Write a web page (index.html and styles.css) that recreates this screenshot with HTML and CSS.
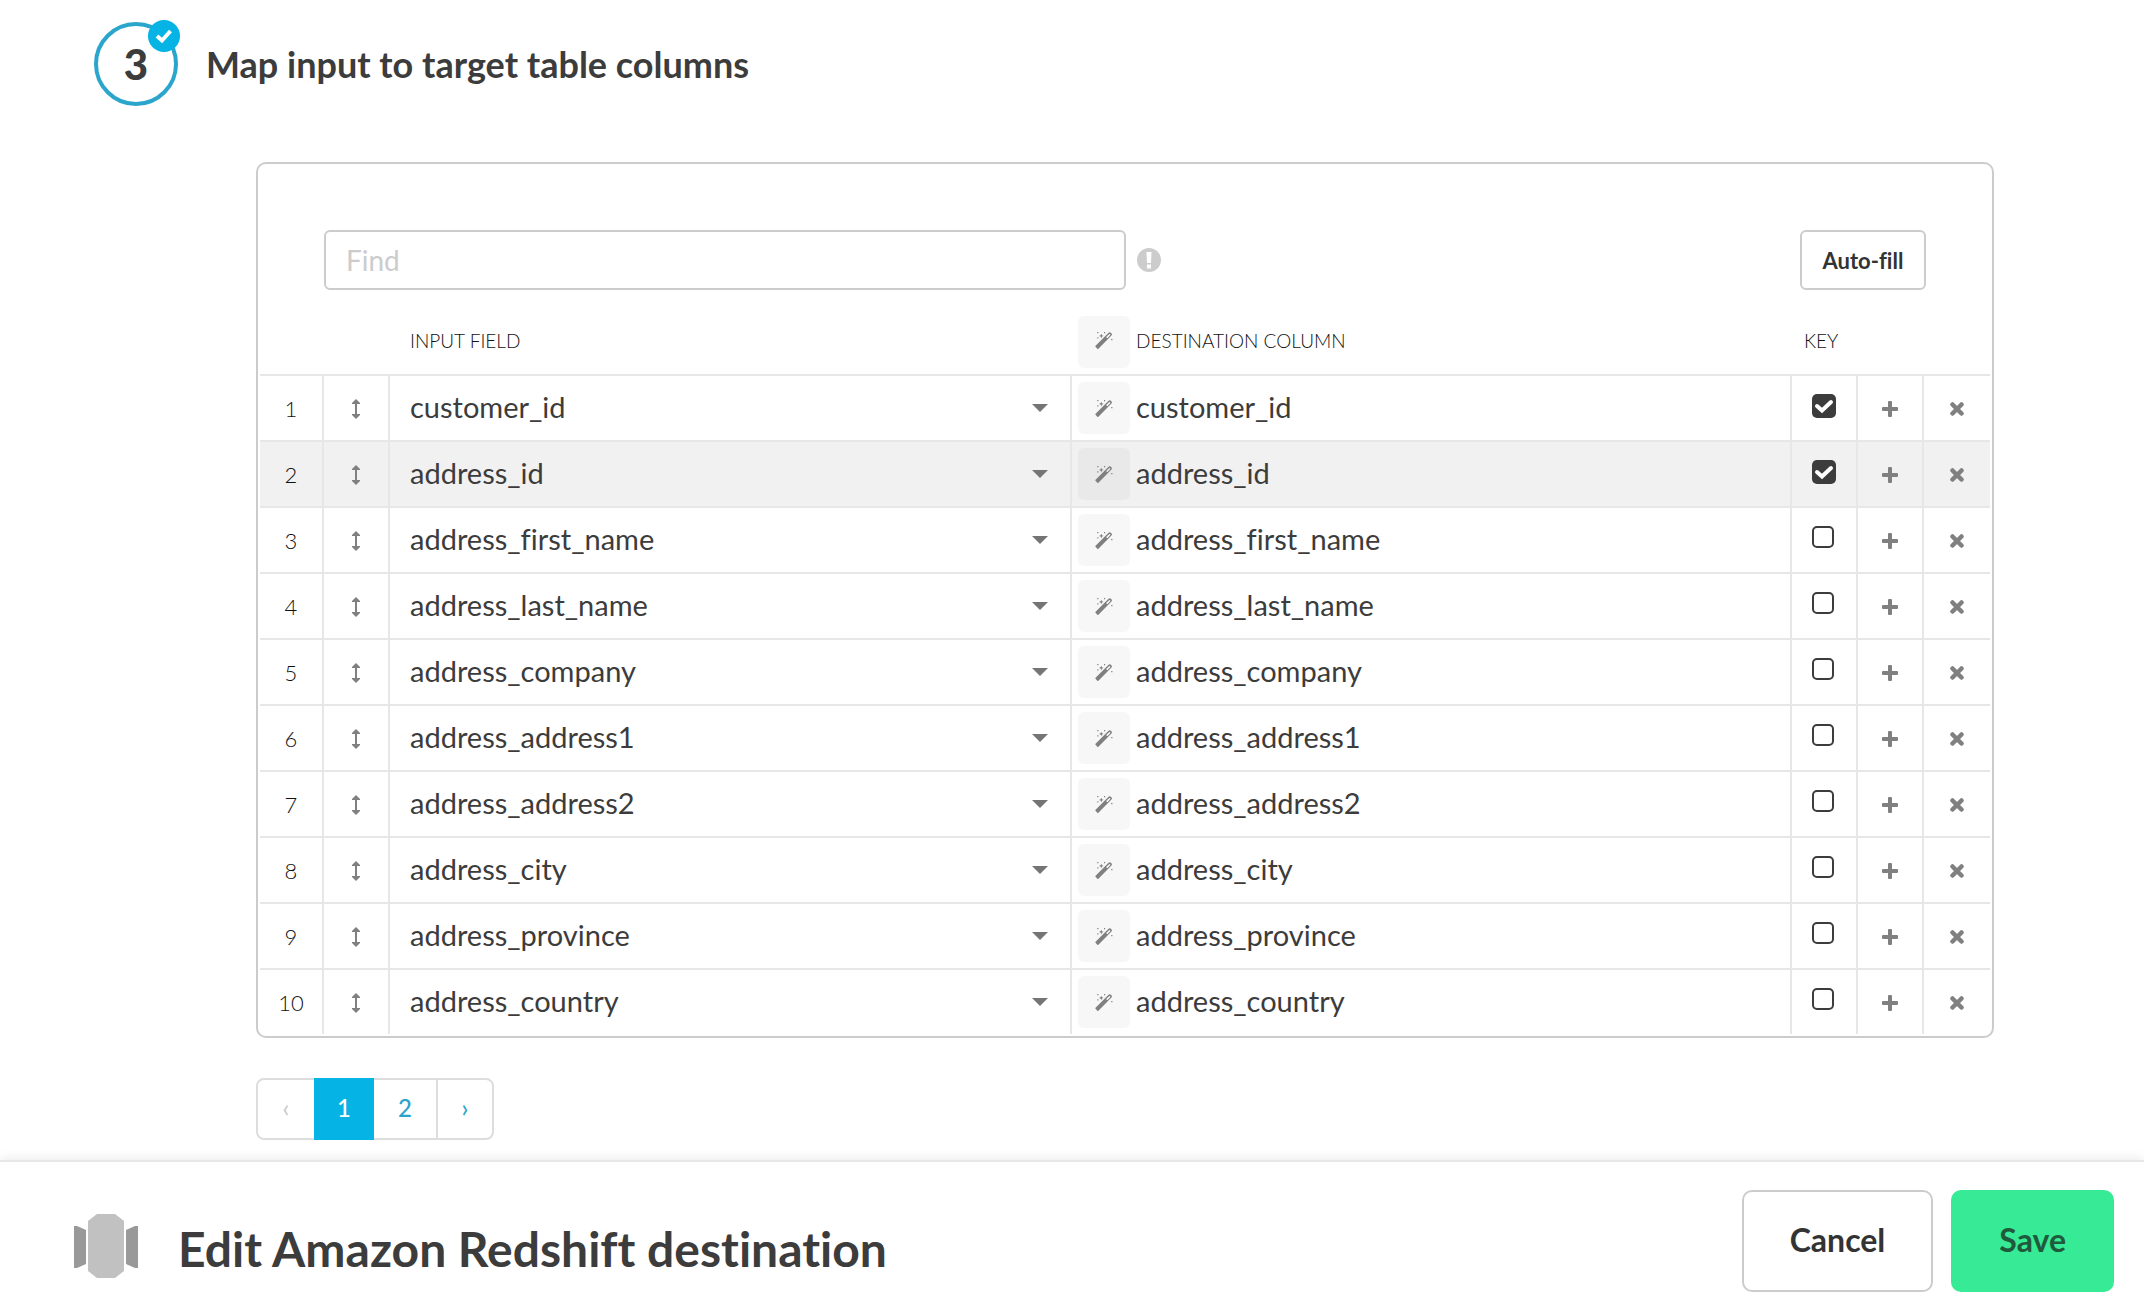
FILE: index.html
```html
<!DOCTYPE html>
<html lang="en">
<head>
<meta charset="utf-8">
<title>Edit Amazon Redshift destination</title>
<link rel="stylesheet" href="styles.css">
</head>
<body>
<svg class="sprite" aria-hidden="true">
  <symbol id="i-move" viewBox="0 0 8 20"><path d="M4 0l4 4v1H5v10h3v1l-4 4-4-4v-1h3V5H0V4z"/></symbol>
  <symbol id="i-wand" viewBox="0 0 20 20"><path fill-rule="evenodd" d="M0.600 16.400 14.800 2.200q1.600-1.600 3.200 0t0 3.200L3.800 19.600q-.6.600-1.200 0L.6 17.600q-.6-.6 0-1.200zM12.400 6.800l1.200 1.200 3-3q.8-.8.200-1.400t-1.400.2z"/><path d="M7 3l.8 1.800 1.800.7-1.800.7L7 8l-.8-1.800-1.800-.7 1.800-.7zM2.500 1.200h1.300v1.300H2.500zM10 1.200h1.300v1.300H10zM2.500 7h1.300v1.300H2.500zM18 9h1.400v1.400H18z"/></symbol>
  <symbol id="i-plus" viewBox="0 0 16 16"><path d="M7 0h2q1 0 1 1v5h5q1 0 1 1v2q0 1-1 1h-5v5q0 1-1 1H7q-1 0-1-1v-5H1q-1 0-1-1V7q0-1 1-1h5V1q0-1 1-1z"/></symbol>
  <symbol id="i-times" viewBox="0 0 14 14"><path d="M2.500 2.500 11.500 11.500M11.500 2.500 2.500 11.500" stroke="currentColor" stroke-width="4.500" stroke-linecap="round"/></symbol>
</svg>
<main class="step">
  <header class="step-head">
    <div class="step-number">3
      <span class="step-done"><svg viewBox="0 0 32 32"><path d="M9 16l5 4.500 8.500-9.500" fill="none" stroke="#fff" stroke-width="4"/></svg></span>
    </div>
    <h2 class="step-title">Map input to target table columns</h2>
  </header>
  <section class="card">
    <div class="toolbar">
      <input class="find" type="text" placeholder="Find" aria-label="Find">
      <svg class="hint" viewBox="0 0 24 24" role="img" aria-label="Help"><circle cx="12" cy="12" r="12" fill="#ccc"/><path d="M9.500 4h5l-.5 11h-4zM10 16.500h4v4h-4z" fill="#fff"/></svg>
      <button class="autofill" type="button">Auto-fill</button>
    </div>
    <table class="mapping">
      <colgroup><col class="c-num"><col class="c-act"><col class="c-in"><col class="c-out"><col class="c-act"><col class="c-act"><col class="c-last"></colgroup>
      <thead><tr>
        <th></th><th></th>
        <th class="field"><span class="label">INPUT FIELD</span></th>
        <th><div class="dest"><button class="wand" type="button" aria-label="Rename all"><svg><use href="#i-wand"/></svg></button><span class="label">DESTINATION COLUMN</span></div></th>
        <th class="key"><span class="label">KEY</span></th><th></th><th></th>
      </tr></thead>
      <tbody id="rows"></tbody>
    </table>
  </section>
  <nav class="pages" aria-label="Pages">
    <a class="off" aria-disabled="true" href="#">‹</a><a class="current" href="#">1</a><a class="page" href="#">2</a><a class="next" href="#">›</a>
  </nav>
</main>
<footer class="bar">
  <svg class="logo" viewBox="0 0 64 64" aria-hidden="true"><path d="M0 12h3l9 4v34l-9 4H0zM64 12h-3l-9 4v34l9 4h3z" fill="#999"/><path d="M23 0h18l9 7v50l-9 7H23l-9-7V7z" fill="#c1c1c1"/></svg>
  <h1 class="bar-title">Edit Amazon Redshift destination</h1>
  <button class="btn" type="button">Cancel</button>
  <button class="btn save" type="button">Save</button>
</footer>
<script src="rows.js"></script>
</body>
</html>
```
FILE: rows.js
```js
const fields = ["customer_id", "address_id", "address_first_name", "address_last_name", "address_company", "address_address1", "address_address2", "address_city", "address_province", "address_country"];
const keys = ["customer_id", "address_id"];
document.getElementById("rows").innerHTML = fields.map((name, i) => `
  <tr class="${i === 1 ? "active" : ""}">
    <td class="num">${i + 1}</td>
    <td><button class="icon" type="button" aria-label="Move ${name}"><svg class="move"><use href="#i-move"/></svg></button></td>
    <td class="field"><select aria-label="Input field ${i + 1}"><option>${name}</option></select></td>
    <td><div class="dest"><button class="wand" type="button" aria-label="Rename ${name}"><svg><use href="#i-wand"/></svg></button><span class="name">${name}</span></div></td>
    <td class="check"><input type="checkbox" aria-label="Key ${name}" ${keys.includes(name) ? "checked" : ""}></td>
    <td><button class="icon" type="button" aria-label="Add after ${name}"><svg class="plus"><use href="#i-plus"/></svg></button></td>
    <td><button class="icon" type="button" aria-label="Remove ${name}"><svg class="times"><use href="#i-times"/></svg></button></td>
  </tr>`).join("");
```
FILE: styles.css
```css
* { box-sizing: border-box; }
body {
  margin: 0;
  min-height: 100vh;
  display: flex;
  flex-direction: column;
  background: #fff;
  color: #3c3c3c;
  font-family: Lato, "Liberation Sans", sans-serif;
  font-variant-ligatures: none;
}
h1, h2 { margin: 0; }
button, input, select { font: inherit; font-variant-ligatures: none; color: inherit; }
button { cursor: pointer; }
.sprite { display: none; }
.step { flex: 1; padding: 22px 150px 20px 94px; }
.step-head { display: flex; align-items: center; gap: 28px; }
.step-number {
  position: relative;
  width: 84px;
  height: 84px;
  border: 4px solid #2aa6cc;
  border-radius: 50%;
  font-size: 42px;
  font-weight: 900;
  line-height: 76px;
  text-align: center;
}
.step-done { position: absolute; top: -6px; right: -6px; width: 32px; height: 32px; border-radius: 50%; background: #05b3e5; }
.step-done svg { display: block; width: 32px; height: 32px; }
.step-title { font-size: 36px; font-weight: 700; line-height: 44px; }
.card { margin: 56px 0 0 162px; padding: 66px 2px 2px; border: 2px solid #ccc; border-radius: 10px; }
.toolbar { display: flex; align-items: center; padding: 0 64px; }
.find { flex: 0 1 802px; min-width: 0; height: 60px; padding: 0 20px; border: 2px solid #ccc; border-radius: 6px; font-size: 28px; outline: 0; }
.find::placeholder { color: #ccc; opacity: 1; }
.hint { width: 24px; height: 24px; margin-left: 11px; }
.autofill { width: 126px; height: 60px; margin-left: auto; padding: 0; border: 2px solid #ccc; border-radius: 6px; background: #fff; color: #333; font-size: 22px; font-weight: 700; }
.mapping { width: 100%; margin-top: 20px; border-collapse: separate; border-spacing: 0; table-layout: fixed; }
.c-num { width: 62px; }
.c-act { width: 66px; }
.c-in { width: 682px; }
.c-last { width: 68px; }
th, td { height: 66px; padding: 0; border-top: 2px solid #e7e7e7; border-left: 2px solid #e7e7e7; text-align: center; }
th { height: 64px; border: 0; color: #111; font-size: 19px; font-weight: 300; text-align: left; }
td:first-child { border-left: 0; }
.active { background: #f1f1f1; }
.num { color: #111; font-size: 22px; font-weight: 300; }
.label { display: block; padding-bottom: 3px; }
th.field { padding-left: 22px; }
td.field { padding-left: 20px; }
th.key { padding-left: 14px; }
select {
  display: block;
  width: 100%;
  height: 64px;
  padding: 0 44px 4px 0;
  border: 0;
  outline: 0;
  appearance: none;
  background: url("data:image/svg+xml,%3Csvg xmlns='http://www.w3.org/2000/svg' viewBox='0 0 16 8'%3E%3Cpath d='M0 0h16L8 8z' fill='%23757575'/%3E%3C/svg%3E") no-repeat right 22px center / 16px 8px;
  font-size: 29px;
}
.dest { display: flex; align-items: center; gap: 6px; padding-left: 6px; }
th .dest { padding-left: 8px; }
.name { padding-bottom: 2px; font-size: 29px; line-height: 40px; }
.wand { display: grid; place-items: center; width: 52px; height: 52px; padding: 0; border: 0; border-radius: 6px; background: #f7f7f7; color: #808080; }
.wand svg { width: 18px; height: 18px; fill: currentColor; }
th .wand { padding-bottom: 4px; }
.active .wand { background: #e9e9e9; }
.check { padding: 18px 0 0 20px; text-align: left; vertical-align: top; }
.check input { display: block; appearance: none; width: 22px; height: 22px; margin: 0; border: 2px solid #3c3c3c; border-radius: 5px; background: #fff; }
.check input:checked {
  width: 24px;
  height: 24px;
  border: 0;
  background: #3c3c3c url("data:image/svg+xml,%3Csvg xmlns='http://www.w3.org/2000/svg' viewBox='0 0 24 24'%3E%3Cpath d='M5 12l5 4.500L19 8' fill='none' stroke='%23fff' stroke-width='4' stroke-linecap='round'/%3E%3C/svg%3E");
}
.icon { display: grid; place-items: center; width: 100%; height: 64px; padding: 2px 0 0; border: 0; background: none; color: #808080; }
.icon svg { fill: currentColor; }
.move { width: 8px; height: 20px; }
.plus { width: 16px; height: 16px; }
.times { width: 14px; height: 14px; }
.pages { display: inline-flex; margin: 40px 0 0 162px; border: 2px solid #ddd; border-radius: 8px; font-size: 24px; font-weight: 500; line-height: 56px; }
.pages a { height: 58px; color: #2ba3cb; text-align: center; text-decoration: none; }
.pages .off { width: 56px; color: #ccc; }
.pages .current { width: 60px; height: 62px; margin: -2px 0; background: #05b3e5; color: #fff; line-height: 60px; }
.pages .page { width: 62px; }
.pages .next { width: 56px; border-left: 2px solid #ddd; }
.bar { display: flex; align-items: center; gap: 18px; height: 148px; padding: 12px 30px 0 74px; border-top: 2px solid #e7e7e7; background: #fff; box-shadow: 0 -2px 10px rgba(0, 0, 0, .08); }
.logo { width: 64px; height: 64px; margin-top: 10px; }
.bar-title { flex: 1; padding: 16px 0 0 22px; font-size: 48px; font-weight: 700; line-height: 56px; }
.btn { height: 102px; padding: 0 46px 4px; border: 2px solid #ccc; border-radius: 10px; background: #fff; color: #333; font-size: 32px; font-weight: 700; }
.save { border-color: #37eb96; background: #37eb96; color: #1f5a3c; }
```
